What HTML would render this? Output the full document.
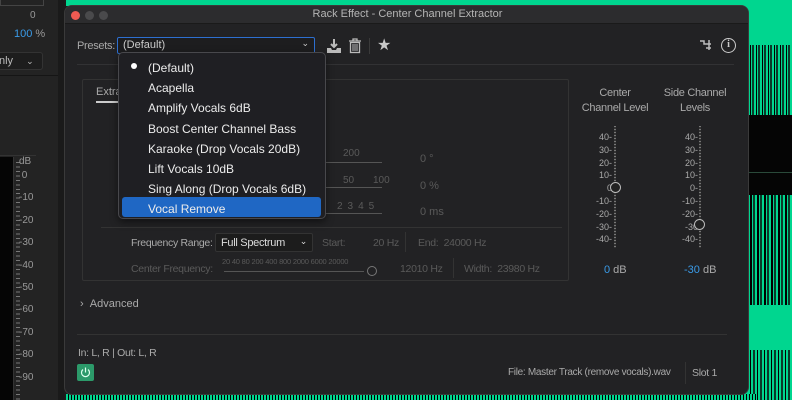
<!DOCTYPE html>
<html style="width:792px;height:400px;overflow:hidden"><head><meta charset="utf-8"><style>
*{margin:0;padding:0;box-sizing:border-box}
body{width:792px;height:400px;overflow:hidden;background:#1c1c1c;font-family:"Liberation Sans",sans-serif;position:relative}
.a{position:absolute;white-space:nowrap}
.g{color:#5a5a5a;font-size:10px}
.t{color:#b9b9b9;font-size:11px}
.n{letter-spacing:-0.3px}
</style></head><body>
<!-- right green waveform area -->
<div class="a" style="left:740px;top:0;width:52px;height:400px;background:#00d68f"></div>
<div class="a" style="left:748px;top:45px;width:44px;height:80px;background:repeating-linear-gradient(90deg,#00d68f 0 2px,#000 2px 3px,#00d68f 3px 4px,#0a3a2a 4px 6px)"></div>
<div class="a" style="left:748px;top:115px;width:44px;height:90px;background:#050505"></div>
<div class="a" style="left:748px;top:195px;width:44px;height:110px;background:repeating-linear-gradient(90deg,#00d68f 0 2px,#000 2px 4px,#00d68f 4px 5px,#0a3a2a 5px 7px)"></div>
<div class="a" style="left:748px;top:172px;width:44px;height:1px;background:#2a4a3a"></div>
<div class="a" style="left:748px;top:350px;width:44px;height:50px;background:repeating-linear-gradient(90deg,#00d68f 0 2px,#000 2px 3px,#00d68f 3px 5px,#0a3a2a 5px 7px)"></div>
<!-- top green and bottom -->
<div class="a" style="left:66px;top:0;width:690px;height:6px;background:#00d68f"></div>
<div class="a" style="left:66px;top:394px;width:690px;height:6px;background:repeating-linear-gradient(90deg,#00d68f 0 2px,#000 2px 3px)"></div>
<!-- left panel -->
<div class="a" style="left:0;top:0;width:58px;height:400px;background:#232323"></div>
<div class="a" style="left:58px;top:0;width:6px;height:400px;background:#1a1a1a"></div>
<div class="a" style="left:0;top:0;width:44px;height:6px;border:1px solid #444;border-top:none"></div>
<div class="a" style="left:30px;top:10px;color:#999;font-size:10px">0</div>
<div class="a" style="left:14px;top:28px;font-size:11px;color:#3a9be8">100 <span style="color:#999">%</span></div>
<div class="a" style="left:-2px;top:52px;width:45px;height:18px;background:#1d1d1d;border:1px solid #333;border-radius:3px;color:#bbb;font-size:11px;padding:2px 0 0 0">nly <span style="margin-left:10px;font-size:9px">&#8964;</span></div>
<div class="a" style="left:0;top:75px;width:58px;height:1px;background:#151515"></div>
<div class="a" style="left:0;top:157px;width:14px;height:243px;background:#050505;border-right:1px solid #333"></div>
<div class="a" style="left:16px;top:162px;width:4px;height:238px;background:repeating-linear-gradient(180deg,#777 0 1px,transparent 1px 4.46px)"></div>
<div class="a" style="left:0;top:155px;width:36px;height:1px;background:#333"></div>
<div class="a" style="left:19px;top:156px;font-size:10px;color:#999">dB</div>
<div class="a" style="left:19px;top:165px;font-size:10px;color:#999;line-height:22.4px">&nbsp;0<br>-10<br>-20<br>-30<br>-40<br>-50<br>-60<br>-70<br>-80<br>-90</div>
<!-- window -->
<div class="a" style="left:64px;top:5px;width:685px;height:390px;background:#222224;border-radius:8px;border:1px solid #3a3a3a;overflow:hidden">
 <div class="a" style="left:0;top:0;width:685px;height:18px;background:#2c2c2e;border-bottom:1px solid #1a1a1a"></div>
 <div class="a" style="left:6px;top:5px;width:9px;height:9px;border-radius:50%;background:#ee5a52"></div>
 <div class="a" style="left:20px;top:5px;width:9px;height:9px;border-radius:50%;background:#4a4a4c"></div>
 <div class="a" style="left:34px;top:5px;width:9px;height:9px;border-radius:50%;background:#4a4a4c"></div>
 <div class="a" style="left:0;top:2px;width:685px;text-align:center;color:#b5b5b5;font-size:11px">Rack Effect - Center Channel Extractor</div>
</div>
<div class="a t n" style="left:77px;top:40px;color:#a8a8a8">Presets:</div>
<div class="a" style="left:117px;top:37px;width:198px;height:17px;border:1px solid #2d6fd0;border-radius:2px;background:#1d1d1f;color:#ccc;font-size:11px;padding:1px 0 0 5px">(Default)<span style="position:absolute;right:5px;top:0;font-size:9px">&#8964;</span></div>
<svg class="a" style="left:326px;top:38px" width="16" height="16" viewBox="0 0 16 16"><path d="M8 1v8M5 6l3 3 3-3" stroke="#bbb" stroke-width="2" fill="none"/><path d="M1 10h4l1 2h4l1-2h4v5H1z" fill="#bbb"/></svg>
<svg class="a" style="left:348px;top:38px" width="14" height="16" viewBox="0 0 14 16"><path d="M1 3h12M5 3V1h4v2" stroke="#bbb" stroke-width="1.3" fill="none"/><rect x="2.5" y="4.5" width="9" height="10" stroke="#bbb" stroke-width="1.3" fill="none"/><path d="M5 6v7M7 6v7M9 6v7" stroke="#bbb"/></svg>
<div class="a" style="left:369px;top:38px;width:1px;height:16px;background:#3a3a3a"></div>
<div class="a" style="left:377px;top:35px;color:#c8c8c8;font-size:16px">&#9733;</div>
<svg class="a" style="left:699px;top:39px" width="14" height="12" viewBox="0 0 14 12"><path d="M1 2h4v3h5M10 1v10M7 5h5M7 9h5" stroke="#bbb" stroke-width="1.5" fill="none"/></svg>
<div class="a" style="left:721px;top:38px;width:15px;height:15px;border:1.5px solid #ccc;border-radius:50%;color:#ccc;font-size:10px;text-align:center;line-height:12px;font-family:'Liberation Serif',serif;font-weight:bold">i</div>
<div class="a" style="left:77px;top:64px;width:657px;height:1px;background:#323234"></div>
<!-- inner panel -->
<div class="a" style="left:82px;top:79px;width:487px;height:202px;border:1px solid #333;border-radius:2px"></div>
<div class="a t" style="left:96px;top:86px;color:#aaa">Extra</div>
<div class="a" style="left:96px;top:101px;width:22px;height:2px;background:#ccc"></div>
<div class="a g" style="left:343px;top:148px">200</div>
<div class="a" style="left:326px;top:162px;width:56px;height:1px;background:#555"></div>
<div class="a g" style="left:343px;top:175px">50</div><div class="a g" style="left:373px;top:175px">100</div>
<div class="a" style="left:326px;top:187px;width:56px;height:1px;background:#555"></div>
<div class="a g" style="left:337px;top:201px;letter-spacing:5px">2345</div>
<div class="a" style="left:326px;top:213px;width:56px;height:1px;background:#555"></div>
<div class="a g" style="left:420px;top:153px;font-size:11px">0 °</div>
<div class="a g" style="left:420px;top:180px;font-size:11px">0 %</div>
<div class="a g" style="left:420px;top:206px;font-size:11px">0 ms</div>
<div class="a" style="left:101px;top:227px;width:461px;height:1px;background:#333"></div>
<div class="a t n" style="left:131px;top:237px;color:#aaa;font-size:10.5px">Frequency Range:</div>
<div class="a n" style="left:215px;top:233px;width:98px;height:19px;background:#1c1c1c;border:1px solid #333;border-radius:2px;color:#ddd;font-size:11px;padding:3px 0 0 5px">Full Spectrum<span style="position:absolute;right:5px;top:2px;font-size:9px">&#8964;</span></div>
<div class="a g n" style="left:322px;top:237px;font-size:10.5px">Start:</div>
<div class="a g n" style="left:373px;top:237px;font-size:10.5px">20 Hz</div>
<div class="a" style="left:405px;top:232px;width:1px;height:20px;background:#333"></div>
<div class="a g n" style="left:418px;top:237px;font-size:10.5px">End:&nbsp;&nbsp;24000 Hz</div>
<div class="a g n" style="left:131px;top:263px;font-size:10.5px">Center Frequency:</div>
<div class="a g" style="left:222px;top:257px;font-size:7.5px;letter-spacing:-0.2px">20 40 80 200 400 800 2000 6000 20000</div>
<div class="a" style="left:224px;top:271px;width:140px;height:1px;background:#555"></div>
<div class="a" style="left:367px;top:266px;width:10px;height:10px;border:1.5px solid #777;border-radius:50%"></div>
<div class="a g n" style="left:400px;top:263px;font-size:10.5px">12010 Hz</div>
<div class="a" style="left:453px;top:258px;width:1px;height:20px;background:#333"></div>
<div class="a g n" style="left:464px;top:263px;font-size:10.5px">Width:&nbsp;&nbsp;23980 Hz</div>
<!-- level meters -->
<div class="a t n" style="left:575px;top:86px;width:80px;text-align:center;color:#aaa;line-height:15px">Center<br>Channel Level</div>
<div class="a t n" style="left:655px;top:86px;width:80px;text-align:center;color:#aaa;line-height:15px">Side Channel<br>Levels</div>
<div class="a" style="left:614px;top:126px;width:2px;height:122px;background:repeating-linear-gradient(180deg,#777 0 1px,#333 1px 3px)"></div>
<div class="a" style="left:699px;top:126px;width:2px;height:122px;background:repeating-linear-gradient(180deg,#777 0 1px,#333 1px 3px)"></div>
<div class="a" style="left:594px;top:131px;width:18px;text-align:right;color:#aaa;font-size:9px;line-height:12.8px">40-<br>30-<br>20-<br>10-<br>0<br>-10-<br>-20-<br>-30-<br>-40-</div>
<div class="a" style="left:678px;top:131px;width:20px;text-align:right;color:#aaa;font-size:9px;line-height:12.8px">40-<br>30-<br>20-<br>10-<br>0-<br>-10-<br>-20-<br>-30<br>-40-</div>
<div class="a" style="left:610px;top:182px;width:11px;height:11px;border:1.5px solid #bbb;border-radius:50%;background:#222"></div>
<div class="a" style="left:694px;top:219px;width:11px;height:11px;border:1.5px solid #bbb;border-radius:50%;background:#222"></div>
<div class="a" style="left:604px;top:264px;font-size:11px;color:#aaa"><span style="color:#3a9be8">0</span> dB</div>
<div class="a" style="left:684px;top:264px;font-size:11px;color:#aaa"><span style="color:#3a9be8">-30</span> dB</div>
<div class="a t" style="left:80px;top:298px;color:#aaa">›&nbsp;&nbsp;Advanced</div>
<div class="a" style="left:77px;top:334px;width:650px;height:1px;background:#333"></div>
<div class="a t n" style="left:78px;top:347px;color:#aaa;font-size:10.5px">In: L, R | Out: L, R</div>
<div class="a" style="left:77px;top:364px;width:17px;height:17px;background:#2c9a6a;border-radius:2px"></div>
<svg class="a" style="left:79px;top:366px" width="13" height="13" viewBox="0 0 13 13"><path d="M4 3.5A4 4 0 1 0 9 3.5" stroke="#dfe" stroke-width="1.2" fill="none"/><path d="M6.5 1.5v5" stroke="#dfe" stroke-width="1.2"/></svg>
<div class="a n" style="left:508px;top:367px;color:#aaa;font-size:10px">File: Master Track (remove vocals).wav</div>
<div class="a" style="left:685px;top:362px;width:1px;height:22px;background:#333"></div>
<div class="a n" style="left:692px;top:367px;color:#aaa;font-size:10.5px">Slot 1</div>
<!-- dropdown -->
<div class="a" style="left:118px;top:52px;width:208px;height:167px;background:#1f1f23;border:1px solid #48484c;border-radius:5px;box-shadow:0 3px 8px rgba(0,0,0,.5)"></div>
<div class="a" style="left:131px;top:63px;width:6px;height:6px;border-radius:50%;background:#fff"></div>
<div class="a" style="left:122px;top:197px;width:199px;height:20px;background:#1f67c4;border-radius:3px"></div>
<div class="a" style="left:148px;top:58px;color:#ececec;font-size:12px;line-height:20.2px">(Default)<br>Acapella<br>Amplify Vocals 6dB<br>Boost Center Channel Bass<br>Karaoke (Drop Vocals 20dB)<br>Lift Vocals 10dB<br>Sing Along (Drop Vocals 6dB)<br>Vocal Remove</div>
</body></html>
